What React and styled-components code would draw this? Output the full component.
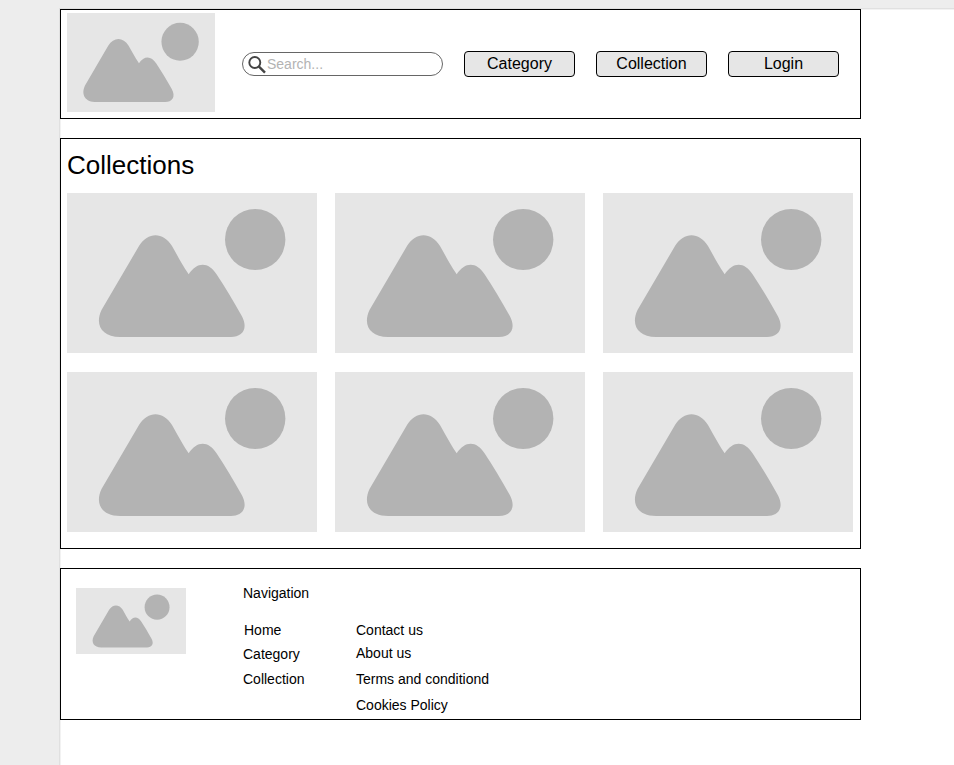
import React from 'react';
import styled, { createGlobalStyle } from 'styled-components';

const GlobalStyle = createGlobalStyle`
  * { box-sizing: border-box; }
  html, body { margin: 0; height: 100%; overflow: hidden; }
  body {
    background: #ededed;
    color: #000;
    font-family: "Liberation Sans", Arial, sans-serif;
  }
`;

const Canvas = styled.div`
  height: 100vh;
  padding: 8px 0 0 59px;
`;

const Sheet = styled.main`
  height: 100%;
  border-top: 1px solid #e0e0e0;
  border-left: 1px solid #e0e0e0;
  background: #fff;
  box-shadow: inset 1px 1px 0 #f2f2f2;
  display: flex;
  flex-direction: column;
  gap: 19px;
`;

const Panel = styled.section`
  width: 801px;
  height: ${(p) => p.$height}px;
  flex: none;
  border: 1px solid #000;
  background: #fff;
`;

const HeaderPanel = styled(Panel).attrs({ as: 'header' })`
  display: flex;
  align-items: flex-start;
  padding: 3px 0 0 6px;
`;

const CollectionsPanel = styled(Panel)`
  padding: 11px 0 0 6px;
`;

const FooterPanel = styled(Panel).attrs({ as: 'footer' })`
  display: flex;
  align-items: flex-start;
  padding: 19px 0 0 15px;
`;

const Picture = styled.svg`
  display: block;
  flex: none;
  width: ${(p) => p.$width}px;
  height: ${(p) => p.$height}px;
  background: #e6e6e6;
  fill: #b3b3b3;
`;

const SearchBox = styled.label`
  display: flex;
  align-items: center;
  width: 201px;
  height: 24px;
  margin: 39px 21px 0 27px;
  padding-left: 5px;
  border: 1px solid #666;
  border-radius: 12px;
  background: #fff;
`;

const SearchIcon = styled.svg`
  flex: none;
  width: 19px;
  height: 19px;
  fill: none;
  stroke: #444;
`;

const SearchInput = styled.input`
  width: 160px;
  height: 18px;
  padding: 0;
  border: 0;
  outline: 0;
  background: transparent;
  font: 14px "Liberation Sans", Arial, sans-serif;
  &::placeholder { color: #b3b3b3; opacity: 1; }
`;

const Menu = styled.nav`
  display: flex;
  gap: 21px;
  margin-top: 38px;
`;

const MenuButton = styled.button`
  width: 111px;
  height: 26px;
  padding: 0 0 1px;
  border: 1px solid #000;
  border-radius: 4px;
  background: #e6e6e6;
  color: #000;
  font: 16px "Liberation Sans", Arial, sans-serif;
`;

const Title = styled.h1`
  margin: 0 0 13px;
  font-size: 26px;
  line-height: 30px;
  font-weight: 400;
`;

const Gallery = styled.div`
  display: grid;
  grid-template-columns: repeat(3, 250px);
  gap: 19px 18px;
`;

const FooterNav = styled.nav`
  margin: -3px 0 0 57px;
  font-size: 14px;
  line-height: 16px;
`;

const FooterHeading = styled.h2`
  margin: 0 0 21px;
  font-size: 14px;
  line-height: 16px;
  font-weight: 400;
`;

const LinkColumns = styled.div`
  display: grid;
  grid-template-columns: 113px auto;
`;

const LinkList = styled.ul`
  margin: 0;
  padding: 0;
  list-style: none;
`;

const LinkItem = styled.li`
  margin-top: ${(p) => p.$space || 0}px;
  padding-left: ${(p) => p.$indent || 0}px;
  white-space: nowrap;
`;

function Placeholder({ width, height, fit = 'meet' }) {
  return (
    <Picture $width={width} $height={height} viewBox="0 0 250 160" preserveAspectRatio={`xMidYMid ${fit}`}>
      <ellipse cx="188.2" cy="46.5" rx="30.2" ry="30.6" />
      <path d="M34.5 117 L72 53 C81 38.5 96 38.5 105 53 C110 61.5 114 70 121.7 81.3 C130 68.500 141.500 68.500 149.700 81.500 C158 94 166 107.500 174.500 122.500 C182 136 175 144 164 144 L53 144 C35 144 27.500 132 34.500 117 Z" />
    </Picture>
  );
}

const menu = ['Category', 'Collection', 'Login'];
const pictures = [1, 2, 3, 4, 5, 6];
const siteLinks = [
  { label: 'Home', indent: 1 },
  { label: 'Category', space: 8 },
  { label: 'Collection', space: 9 },
];
const infoLinks = [
  { label: 'Contact us' },
  { label: 'About us', space: 7 },
  { label: 'Terms and conditiond', space: 10 },
  { label: 'Cookies Policy', space: 10 },
];

function Links({ items }) {
  return (
    <LinkList>
      {items.map((item) => (
        <LinkItem key={item.label} $space={item.space} $indent={item.indent}>{item.label}</LinkItem>
      ))}
    </LinkList>
  );
}

export default function App() {
  return (
    <>
      <GlobalStyle />
      <Canvas>
        <Sheet>
          <HeaderPanel $height={110}>
            <Placeholder width={148} height={99} fit="slice" />
            <SearchBox>
              <SearchIcon viewBox="0 0 19 19">
                <circle cx="6.800" cy="7.500" r="5.500" strokeWidth="1.900" />
                <path d="M10.700 11.400 L17 17.700" strokeWidth="2.400" />
              </SearchIcon>
              <SearchInput placeholder="Search..." />
            </SearchBox>
            <Menu>
              {menu.map((label) => <MenuButton key={label}>{label}</MenuButton>)}
            </Menu>
          </HeaderPanel>
          <CollectionsPanel $height={411}>
            <Title>Collections</Title>
            <Gallery>
              {pictures.map((id) => <Placeholder key={id} width={250} height={160} />)}
            </Gallery>
          </CollectionsPanel>
          <FooterPanel $height={152}>
            <Placeholder width={110} height={66} />
            <FooterNav>
              <FooterHeading>Navigation</FooterHeading>
              <LinkColumns>
                <Links items={siteLinks} />
                <Links items={infoLinks} />
              </LinkColumns>
            </FooterNav>
          </FooterPanel>
        </Sheet>
      </Canvas>
    </>
  );
}
